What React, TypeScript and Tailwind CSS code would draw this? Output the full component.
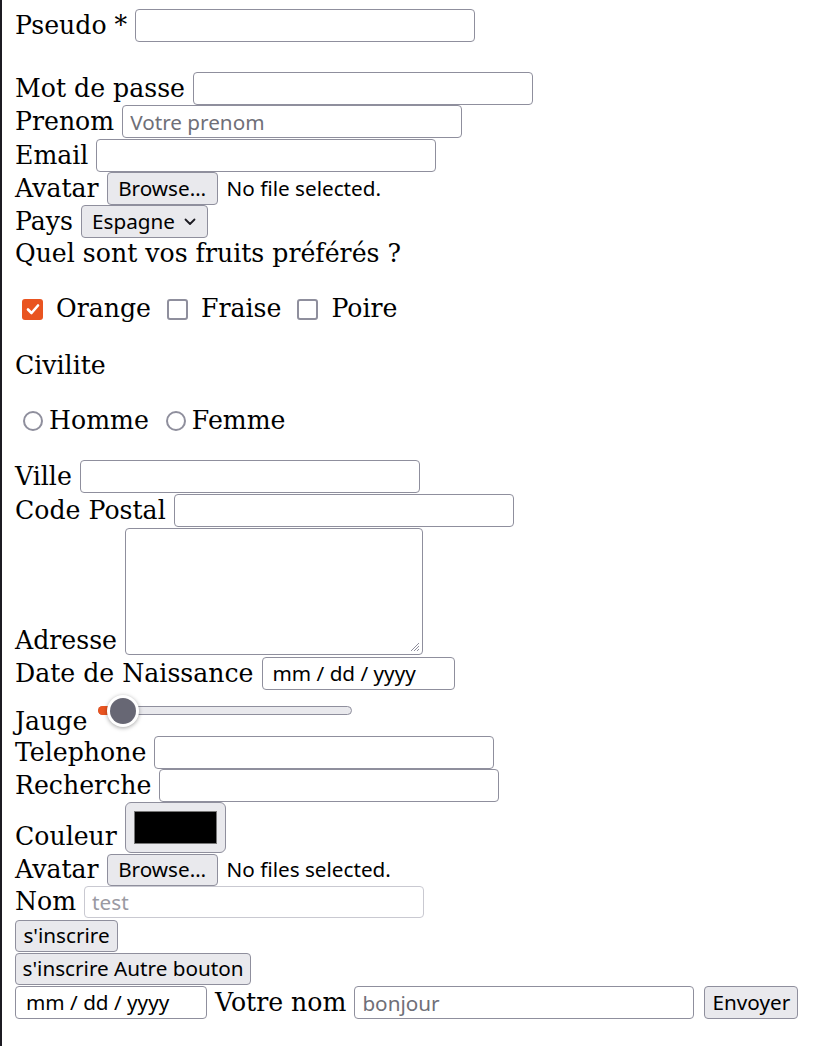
import React from "react";

const serif = "font-['DejaVu_Serif','Liberation_Serif',serif] text-[25.2px] leading-[28px] text-black whitespace-nowrap";
const sans = "font-['Noto_Sans','Open_Sans',sans-serif] text-[20.7px]";
const inputCls =
  "h-[33px] w-[340px] rounded-[4px] border border-[#8f8f9d] bg-white px-[7px] text-black outline-none placeholder:text-[#6f6f78] " +
  sans;
const btnBase =
  "flex items-center rounded-[4px] border border-[#8f8f9d] bg-[#e9e9ed] text-black whitespace-nowrap " + sans;
const btnCls = btnBase + " justify-center";

function Label({ children, className = "" }: { children: React.ReactNode; className?: string }) {
  return <span className={serif + " " + className}>{children}</span>;
}

function Row({ children, className = "" }: { children: React.ReactNode; className?: string }) {
  return <div className={"flex items-center gap-[8px] " + className}>{children}</div>;
}

function Checkbox({ checked }: { checked?: boolean }) {
  if (checked) {
    return (
      <span className="flex h-[21px] w-[21px] shrink-0 items-center justify-center rounded-[3px] bg-[#e95420]">
        <svg width="14" height="12" viewBox="0 0 14 12">
          <polyline points="2,6.5 5.5,10 12,2.5" fill="none" stroke="white" strokeWidth="2.6" strokeLinecap="round" strokeLinejoin="round" />
        </svg>
      </span>
    );
  }
  return <span className="h-[21px] w-[21px] shrink-0 rounded-[3px] border-[2px] border-[#8f8f9d] bg-white" />;
}

function Radio() {
  return <span className="h-[20px] w-[20px] shrink-0 rounded-full border-[2px] border-[#8f8f9d] bg-white" />;
}

function FileInput({ text, h }: { text: string; h: string }) {
  return (
    <div className="flex items-center">
      <div className={btnCls + " w-[111px] " + h}>Browse…</div>
      <span className={sans + " ml-[9px] text-black whitespace-nowrap"}>{text}</span>
    </div>
  );
}

function DateBox({ w }: { w: string }) {
  return (
    <div className={"flex h-[33px] items-center rounded-[4px] border border-[#8f8f9d] bg-white pl-[10px] text-black " + sans + " " + w}>
      mm / dd / yyyy
    </div>
  );
}

export default function App() {
  return (
    <div className="flex min-h-[1046px] bg-white">
      <div className="w-[2px] shrink-0 bg-[#1c1b22]" />
      <div className="flex flex-col pl-[13px] pt-[9px]">
        <Row>
          <Label>Pseudo *</Label>
          <input className={inputCls} />
        </Row>
        <Row className="mt-[30px]">
          <Label>Mot de passe</Label>
          <input type="password" className={inputCls} />
        </Row>
        <Row>
          <Label>Prenom</Label>
          <input className={inputCls} placeholder="Votre prenom" />
        </Row>
        <Row className="mt-[1px]">
          <Label>Email</Label>
          <input className={inputCls} />
        </Row>
        <Row>
          <Label>Avatar</Label>
          <FileInput text="No file selected." h="h-[33px]" />
        </Row>
        <Row>
          <Label>Pays</Label>
          <div className={btnBase + " h-[33px] w-[127px] justify-between pl-[10px] pr-[11px]"}>
            <span>Espagne</span>
            <svg width="12" height="8" viewBox="0 0 12 8">
              <polyline points="1.5,1.5 6,6 10.5,1.5" fill="none" stroke="#1c1b22" strokeWidth="1.8" strokeLinecap="round" strokeLinejoin="round" />
            </svg>
          </div>
        </Row>
        <div className="mt-[2px]">
          <Label>Quel sont vos fruits préférés ?</Label>
        </div>
        <div className="mt-[27px] flex items-center">
          <span className="ml-[7px]" />
          <Checkbox checked />
          <Label className="ml-[13px]">Orange</Label>
          <span className="ml-[16px]" />
          <Checkbox />
          <Label className="ml-[13px]">Fraise</Label>
          <span className="ml-[16px]" />
          <Checkbox />
          <Label className="ml-[13px]">Poire</Label>
        </div>
        <div className="mt-[29px]">
          <Label>Civilite</Label>
        </div>
        <div className="mt-[27px] flex items-center">
          <span className="ml-[8px]" />
          <Radio />
          <Label className="ml-[6px]">Homme</Label>
          <span className="ml-[17px]" />
          <Radio />
          <Label className="ml-[6px]">Femme</Label>
        </div>
        <Row className="mt-[25px]">
          <Label>Ville</Label>
          <input className={inputCls} />
        </Row>
        <Row className="mt-[1px]">
          <Label>Code Postal</Label>
          <input className={inputCls} />
        </Row>
        <div className="mt-[1px] flex items-end gap-[8px]">
          <Label>Adresse</Label>
          <div className="relative h-[127px] w-[298px] rounded-[4px] border border-[#8f8f9d] bg-white">
            <svg className="absolute bottom-[2px] right-[2px]" width="10" height="10" viewBox="0 0 10 10">
              <line x1="9" y1="1" x2="1" y2="9" stroke="#8f8f9d" strokeWidth="1" />
              <line x1="9" y1="4" x2="4" y2="9" stroke="#8f8f9d" strokeWidth="1" />
              <line x1="9" y1="7" x2="7" y2="9" stroke="#8f8f9d" strokeWidth="1" />
            </svg>
          </div>
        </div>
        <Row className="mt-[2px]">
          <Label>Date de Naissance</Label>
          <DateBox w="w-[193px]" />
        </Row>
        <div className="flex h-[46px] items-start gap-[10px]">
          <Label className="mt-[18px]">Jauge</Label>
          <div className="relative mt-[5px] h-[32px] w-[255px]">
            <div className="absolute left-[1px] right-0 top-[11px] h-[9px] rounded-full border border-[#8f8f9d] bg-[#e9e9ed]" />
            <div className="absolute left-[1px] top-[11px] h-[9px] w-[20px] rounded-l-full bg-[#e95420]" />
            <div className="absolute left-[10px] top-0 flex h-[32px] w-[32px] items-center justify-center rounded-full bg-white shadow-[0_1px_4px_rgba(0,0,0,0.35)]">
              <div className="h-[26px] w-[26px] rounded-full bg-[#676774]" />
            </div>
          </div>
        </div>
        <Row>
          <Label>Telephone</Label>
          <input className={inputCls} />
        </Row>
        <Row>
          <Label>Recherche</Label>
          <input className={inputCls} />
        </Row>
        <div className="flex items-end gap-[8px]">
          <Label className="mb-[2px]">Couleur</Label>
          <div className="flex h-[51px] w-[101px] items-center justify-center rounded-[6px] border border-[#8f8f9d] bg-[#e9e9ed]">
            <div className="h-[33px] w-[83px] border border-[#777777] bg-black" />
          </div>
        </div>
        <Row className="mt-[1px]">
          <Label>Avatar</Label>
          <FileInput text="No files selected." h="h-[32px]" />
        </Row>
        <Row>
          <Label>Nom</Label>
          <input
            className={inputCls.replace("border-[#8f8f9d]", "border-[#c9c9d1]").replace("h-[33px]", "h-[32px]") + " placeholder:text-[#9a9aa2]"}
            placeholder="test"
            disabled
          />
        </Row>
        <div className="mt-[2px] flex">
          <div className={btnCls + " h-[32px] w-[103px]"}>s'inscrire</div>
        </div>
        <div className="mt-[1px] flex">
          <div className={btnCls + " h-[32px] w-[236px]"}>s'inscrire Autre bouton</div>
        </div>
        <Row className="mt-[1px]">
          <DateBox w="w-[192px]" />
          <Label>Votre nom</Label>
          <input className={inputCls} placeholder="bonjour" />
          <div className={btnCls + " ml-[2px] h-[33px] w-[94px]"}>Envoyer</div>
        </Row>
      </div>
    </div>
  );
}
